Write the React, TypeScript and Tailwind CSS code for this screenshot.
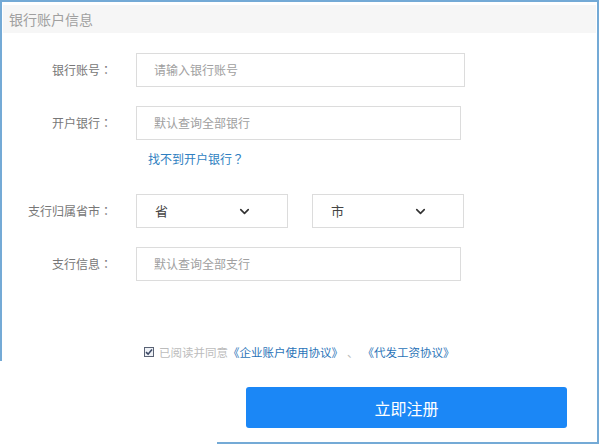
import { ChevronDown } from "lucide-react";

const FIELD =
  "h-[34px] border border-[#dcdcdc] bg-white pl-[17px] text-[12px] leading-[32px] text-[#a0a0a0]";

function Row({ label, children }: { label: string; children: React.ReactNode }) {
  return (
    <div className="flex items-center">
      <div className="w-[110px] text-right text-[12px] text-[#777]">
        {label}
        <span className="font-['Noto_Sans_CJK_JP',sans-serif]">：</span>
      </div>
      <div className="ml-[24px] flex">{children}</div>
    </div>
  );
}

function Select({ text }: { text: string }) {
  return (
    <div className="flex h-[34px] w-[152px] items-center border border-[#dcdcdc] bg-white pl-[18px] pr-[35px]">
      <span className="flex-1 text-[13px] text-[#444]">{text}</span>
      <ChevronDown size={15} strokeWidth={2.6} className="text-[#333]" />
    </div>
  );
}

export default function App() {
  return (
    <div className="h-[444px] w-[600px] overflow-hidden bg-white font-['Noto_Sans_CJK_SC',sans-serif]">
      <div className="w-[599px]">
        {/* upper frame */}
        <div className="h-[361px] border-l-2 border-r-2 border-t-2 border-[#74aad6] pt-[3px]">
          <div className="mx-[1px] h-[28px] bg-[#f6f6f6] pl-[6px] text-[14px] leading-[28px] text-[#a0a0a0]">
            银行账户信息
          </div>

          <div className="mt-[20px] flex flex-col">
            <Row label="银行账号">
              <div className={`${FIELD} w-[329px]`}>请输入银行账号</div>
            </Row>
            <div className="mt-[19px]">
              <Row label="开户银行">
                <div className={`${FIELD} w-[325px]`}>默认查询全部银行</div>
              </Row>
            </div>
            <div className="ml-[146px] mt-[10px] h-[18px] text-[12px] leading-[18px] text-[#2f7fc1]">
              找不到开户银行
              <span className="font-['Noto_Sans_CJK_JP',sans-serif]">？</span>
            </div>
            <div className="mt-[26px]">
              <Row label="支行归属省市">
                <div className="flex gap-[24px]">
                  <Select text="省" />
                  <Select text="市" />
                </div>
              </Row>
            </div>
            <div className="mt-[19px]">
              <Row label="支行信息">
                <div className={`${FIELD} w-[325px]`}>默认查询全部支行</div>
              </Row>
            </div>

            <div className="ml-[142px] mt-[62px] flex h-[18px] items-center text-[11.5px] leading-[18px]">
              <span className="mr-[5px] flex h-[10px] w-[10px] items-center justify-center border border-[#5a6274] bg-[#eef1f6]">
                <svg width="8" height="8" viewBox="0 0 8 8">
                  <path d="M1 4.2 3.1 6.2 7 1.6" fill="none" stroke="#3d4a66" strokeWidth="1.6" />
                </svg>
              </span>
              <span className="text-[#bcbcbc]">已阅读并同意</span>
              <span className="text-[#2b74b8]">《企业账户使用协议》</span>
              <span className="mx-[4px] text-[#bcbcbc]">、</span>
              <span className="text-[#2b74b8]">《代发工资协议》</span>
            </div>
          </div>
        </div>

        {/* lower frame */}
        <div className="flex h-[83px]">
          <div className="w-[217px]" />
          <div className="flex-1 border-b-2 border-r-2 border-[#74aad6] pl-[29px] pt-[26px]">
            <button className="h-[41px] w-[321px] rounded-[3px] bg-[#1b87f6] text-[16px] text-white">
              立即注册
            </button>
          </div>
        </div>
      </div>
    </div>
  );
}
